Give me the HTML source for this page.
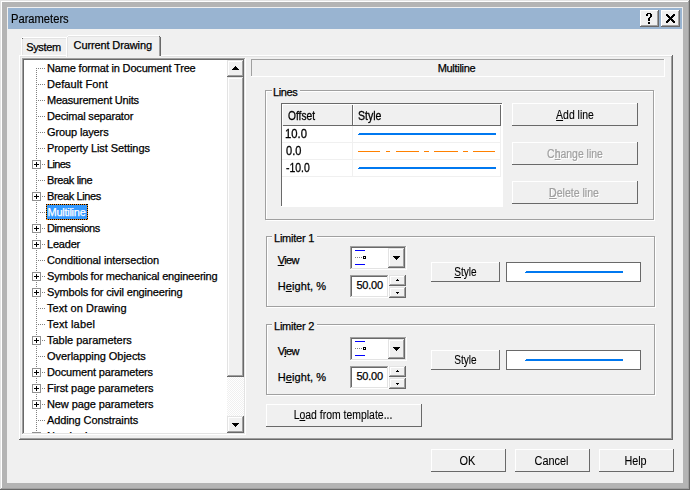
<!DOCTYPE html>
<html><head><meta charset="utf-8"><style>
html,body{margin:0;padding:0;width:690px;height:490px;overflow:hidden;background:#f0f0f0}
div{position:absolute}
.t{font-family:"Liberation Sans",sans-serif;font-size:11px;line-height:13px;white-space:pre;letter-spacing:-0.15px;-webkit-text-stroke:0.25px currentColor}
u{text-decoration:underline;text-underline-offset:1px}
</style></head><body>
<div style="left:0px;top:0px;width:690px;height:490px;background:#b4b4b4;"></div>
<div style="left:0px;top:0px;width:689px;height:1px;background:#e3e3e3;"></div>
<div style="left:0px;top:0px;width:1px;height:489px;background:#e3e3e3;"></div>
<div style="left:0px;top:489px;width:690px;height:1px;background:#696969;"></div>
<div style="left:689px;top:0px;width:1px;height:490px;background:#696969;"></div>
<div style="left:1px;top:1px;width:687px;height:1px;background:#fff;"></div>
<div style="left:1px;top:1px;width:1px;height:487px;background:#fff;"></div>
<div style="left:1px;top:488px;width:688px;height:1px;background:#a0a0a0;"></div>
<div style="left:688px;top:1px;width:1px;height:488px;background:#a0a0a0;"></div>
<div style="left:7px;top:7px;width:676px;height:476px;background:#f0f0f0;"></div>
<div style="left:8px;top:8px;width:674px;height:21px;background:#99b4d1;"></div>
<div class="t" style="left:10.6px;top:13px;color:#000;font-size:12px;letter-spacing:0;-webkit-text-stroke:0.15px currentColor;transform:scaleX(0.93);transform-origin:0 0">Parameters</div>
<div style="left:640px;top:10px;width:19px;height:17px;background:#f0f0f0;"></div>
<div style="left:640px;top:10px;width:18px;height:1px;background:#fff;"></div>
<div style="left:640px;top:10px;width:1px;height:16px;background:#fff;"></div>
<div style="left:640px;top:26px;width:19px;height:1px;background:#696969;"></div>
<div style="left:658px;top:10px;width:1px;height:17px;background:#696969;"></div>
<div style="left:641px;top:11px;width:16px;height:1px;background:#f0f0f0;"></div>
<div style="left:641px;top:11px;width:1px;height:14px;background:#f0f0f0;"></div>
<div style="left:641px;top:25px;width:17px;height:1px;background:#a0a0a0;"></div>
<div style="left:657px;top:11px;width:1px;height:15px;background:#a0a0a0;"></div>
<div style="left:661px;top:10px;width:19px;height:17px;background:#f0f0f0;"></div>
<div style="left:661px;top:10px;width:18px;height:1px;background:#fff;"></div>
<div style="left:661px;top:10px;width:1px;height:16px;background:#fff;"></div>
<div style="left:661px;top:26px;width:19px;height:1px;background:#696969;"></div>
<div style="left:679px;top:10px;width:1px;height:17px;background:#696969;"></div>
<div style="left:662px;top:11px;width:16px;height:1px;background:#f0f0f0;"></div>
<div style="left:662px;top:11px;width:1px;height:14px;background:#f0f0f0;"></div>
<div style="left:662px;top:25px;width:17px;height:1px;background:#a0a0a0;"></div>
<div style="left:678px;top:11px;width:1px;height:15px;background:#a0a0a0;"></div>
<div style="left:647px;top:13px;width:4px;height:1px;background:#000;"></div>
<div style="left:646px;top:14px;width:2px;height:1px;background:#000;"></div>
<div style="left:650px;top:14px;width:2px;height:1px;background:#000;"></div>
<div style="left:646px;top:15px;width:2px;height:1px;background:#000;"></div>
<div style="left:650px;top:15px;width:2px;height:1px;background:#000;"></div>
<div style="left:650px;top:16px;width:2px;height:1px;background:#000;"></div>
<div style="left:649px;top:17px;width:2px;height:1px;background:#000;"></div>
<div style="left:648px;top:18px;width:2px;height:1px;background:#000;"></div>
<div style="left:648px;top:19px;width:2px;height:1px;background:#000;"></div>
<div style="left:648px;top:20px;width:2px;height:1px;background:#000;"></div>
<div style="left:648px;top:22px;width:2px;height:1px;background:#000;"></div>
<div style="left:648px;top:23px;width:2px;height:1px;background:#000;"></div>
<div style="left:666px;top:14px;width:2px;height:1px;background:#000;"></div>
<div style="left:673px;top:14px;width:2px;height:1px;background:#000;"></div>
<div style="left:666px;top:15px;width:3px;height:1px;background:#000;"></div>
<div style="left:672px;top:15px;width:3px;height:1px;background:#000;"></div>
<div style="left:667px;top:16px;width:3px;height:1px;background:#000;"></div>
<div style="left:671px;top:16px;width:3px;height:1px;background:#000;"></div>
<div style="left:668px;top:17px;width:5px;height:1px;background:#000;"></div>
<div style="left:669px;top:18px;width:3px;height:1px;background:#000;"></div>
<div style="left:668px;top:19px;width:5px;height:1px;background:#000;"></div>
<div style="left:667px;top:20px;width:3px;height:1px;background:#000;"></div>
<div style="left:671px;top:20px;width:3px;height:1px;background:#000;"></div>
<div style="left:666px;top:21px;width:3px;height:1px;background:#000;"></div>
<div style="left:672px;top:21px;width:3px;height:1px;background:#000;"></div>
<div style="left:666px;top:22px;width:2px;height:1px;background:#000;"></div>
<div style="left:673px;top:22px;width:2px;height:1px;background:#000;"></div>
<div style="left:19px;top:55px;width:654px;height:385px;background:#f0f0f0;"></div>
<div style="left:19px;top:55px;width:653px;height:1px;background:#fff;"></div>
<div style="left:19px;top:55px;width:1px;height:384px;background:#fff;"></div>
<div style="left:19px;top:439px;width:654px;height:1px;background:#696969;"></div>
<div style="left:672px;top:55px;width:1px;height:385px;background:#696969;"></div>
<div style="left:20px;top:56px;width:651px;height:1px;background:#e3e3e3;"></div>
<div style="left:20px;top:56px;width:1px;height:382px;background:#e3e3e3;"></div>
<div style="left:20px;top:438px;width:652px;height:1px;background:#a0a0a0;"></div>
<div style="left:671px;top:56px;width:1px;height:383px;background:#a0a0a0;"></div>
<div style="left:22px;top:37px;width:45px;height:1px;background:#fff;"></div>
<div style="left:21px;top:38px;width:1px;height:17px;background:#fff;"></div>
<div style="left:23px;top:38px;width:44px;height:1px;background:#e3e3e3;"></div>
<div style="left:22px;top:39px;width:1px;height:16px;background:#e3e3e3;"></div>
<div style="left:22px;top:38px;width:1px;height:1px;background:#696969;"></div>
<div class="t" style="left:26.2px;top:41px;color:#000;letter-spacing:-0.35px">System</div>
<div style="left:66px;top:35px;width:95px;height:22px;background:#f0f0f0;"></div>
<div style="left:68px;top:35px;width:91px;height:1px;background:#fff;"></div>
<div style="left:67px;top:36px;width:1px;height:1px;background:#fff;"></div>
<div style="left:66px;top:37px;width:1px;height:20px;background:#fff;"></div>
<div style="left:68px;top:36px;width:91px;height:1px;background:#e3e3e3;"></div>
<div style="left:67px;top:37px;width:1px;height:20px;background:#e3e3e3;"></div>
<div style="left:159px;top:36px;width:1px;height:20px;background:#a0a0a0;"></div>
<div style="left:160px;top:37px;width:1px;height:19px;background:#696969;"></div>
<div style="left:159px;top:36px;width:1px;height:1px;background:#696969;"></div>
<div class="t" style="left:73.6px;top:39px;color:#000;letter-spacing:-0.12px">Current Drawing</div>
<div style="left:22px;top:58px;width:224px;height:377px;background:#fff;"></div>
<div style="left:22px;top:58px;width:223px;height:1px;background:#a0a0a0;"></div>
<div style="left:22px;top:58px;width:1px;height:376px;background:#a0a0a0;"></div>
<div style="left:22px;top:434px;width:224px;height:1px;background:#fff;"></div>
<div style="left:245px;top:58px;width:1px;height:377px;background:#fff;"></div>
<div style="left:23px;top:59px;width:221px;height:1px;background:#696969;"></div>
<div style="left:23px;top:59px;width:1px;height:374px;background:#696969;"></div>
<div style="left:23px;top:433px;width:222px;height:1px;background:#e3e3e3;"></div>
<div style="left:244px;top:59px;width:1px;height:375px;background:#e3e3e3;"></div>
<div style="left:24px;top:60px;width:203px;height:373px;overflow:hidden;background:#fff">
<svg style="position:absolute;left:0;top:0" width="203" height="373">
<rect x="12" y="8" width="1" height="1" fill="#808080"/>
<rect x="12" y="10" width="1" height="1" fill="#808080"/>
<rect x="12" y="12" width="1" height="1" fill="#808080"/>
<rect x="12" y="14" width="1" height="1" fill="#808080"/>
<rect x="12" y="16" width="1" height="1" fill="#808080"/>
<rect x="12" y="18" width="1" height="1" fill="#808080"/>
<rect x="12" y="20" width="1" height="1" fill="#808080"/>
<rect x="12" y="22" width="1" height="1" fill="#808080"/>
<rect x="12" y="24" width="1" height="1" fill="#808080"/>
<rect x="12" y="26" width="1" height="1" fill="#808080"/>
<rect x="12" y="28" width="1" height="1" fill="#808080"/>
<rect x="12" y="30" width="1" height="1" fill="#808080"/>
<rect x="12" y="32" width="1" height="1" fill="#808080"/>
<rect x="12" y="34" width="1" height="1" fill="#808080"/>
<rect x="12" y="36" width="1" height="1" fill="#808080"/>
<rect x="12" y="38" width="1" height="1" fill="#808080"/>
<rect x="12" y="40" width="1" height="1" fill="#808080"/>
<rect x="12" y="42" width="1" height="1" fill="#808080"/>
<rect x="12" y="44" width="1" height="1" fill="#808080"/>
<rect x="12" y="46" width="1" height="1" fill="#808080"/>
<rect x="12" y="48" width="1" height="1" fill="#808080"/>
<rect x="12" y="50" width="1" height="1" fill="#808080"/>
<rect x="12" y="52" width="1" height="1" fill="#808080"/>
<rect x="12" y="54" width="1" height="1" fill="#808080"/>
<rect x="12" y="56" width="1" height="1" fill="#808080"/>
<rect x="12" y="58" width="1" height="1" fill="#808080"/>
<rect x="12" y="60" width="1" height="1" fill="#808080"/>
<rect x="12" y="62" width="1" height="1" fill="#808080"/>
<rect x="12" y="64" width="1" height="1" fill="#808080"/>
<rect x="12" y="66" width="1" height="1" fill="#808080"/>
<rect x="12" y="68" width="1" height="1" fill="#808080"/>
<rect x="12" y="70" width="1" height="1" fill="#808080"/>
<rect x="12" y="72" width="1" height="1" fill="#808080"/>
<rect x="12" y="74" width="1" height="1" fill="#808080"/>
<rect x="12" y="76" width="1" height="1" fill="#808080"/>
<rect x="12" y="78" width="1" height="1" fill="#808080"/>
<rect x="12" y="80" width="1" height="1" fill="#808080"/>
<rect x="12" y="82" width="1" height="1" fill="#808080"/>
<rect x="12" y="84" width="1" height="1" fill="#808080"/>
<rect x="12" y="86" width="1" height="1" fill="#808080"/>
<rect x="12" y="88" width="1" height="1" fill="#808080"/>
<rect x="12" y="90" width="1" height="1" fill="#808080"/>
<rect x="12" y="92" width="1" height="1" fill="#808080"/>
<rect x="12" y="94" width="1" height="1" fill="#808080"/>
<rect x="12" y="96" width="1" height="1" fill="#808080"/>
<rect x="12" y="98" width="1" height="1" fill="#808080"/>
<rect x="12" y="100" width="1" height="1" fill="#808080"/>
<rect x="12" y="102" width="1" height="1" fill="#808080"/>
<rect x="12" y="104" width="1" height="1" fill="#808080"/>
<rect x="12" y="106" width="1" height="1" fill="#808080"/>
<rect x="12" y="108" width="1" height="1" fill="#808080"/>
<rect x="12" y="110" width="1" height="1" fill="#808080"/>
<rect x="12" y="112" width="1" height="1" fill="#808080"/>
<rect x="12" y="114" width="1" height="1" fill="#808080"/>
<rect x="12" y="116" width="1" height="1" fill="#808080"/>
<rect x="12" y="118" width="1" height="1" fill="#808080"/>
<rect x="12" y="120" width="1" height="1" fill="#808080"/>
<rect x="12" y="122" width="1" height="1" fill="#808080"/>
<rect x="12" y="124" width="1" height="1" fill="#808080"/>
<rect x="12" y="126" width="1" height="1" fill="#808080"/>
<rect x="12" y="128" width="1" height="1" fill="#808080"/>
<rect x="12" y="130" width="1" height="1" fill="#808080"/>
<rect x="12" y="132" width="1" height="1" fill="#808080"/>
<rect x="12" y="134" width="1" height="1" fill="#808080"/>
<rect x="12" y="136" width="1" height="1" fill="#808080"/>
<rect x="12" y="138" width="1" height="1" fill="#808080"/>
<rect x="12" y="140" width="1" height="1" fill="#808080"/>
<rect x="12" y="142" width="1" height="1" fill="#808080"/>
<rect x="12" y="144" width="1" height="1" fill="#808080"/>
<rect x="12" y="146" width="1" height="1" fill="#808080"/>
<rect x="12" y="148" width="1" height="1" fill="#808080"/>
<rect x="12" y="150" width="1" height="1" fill="#808080"/>
<rect x="12" y="152" width="1" height="1" fill="#808080"/>
<rect x="12" y="154" width="1" height="1" fill="#808080"/>
<rect x="12" y="156" width="1" height="1" fill="#808080"/>
<rect x="12" y="158" width="1" height="1" fill="#808080"/>
<rect x="12" y="160" width="1" height="1" fill="#808080"/>
<rect x="12" y="162" width="1" height="1" fill="#808080"/>
<rect x="12" y="164" width="1" height="1" fill="#808080"/>
<rect x="12" y="166" width="1" height="1" fill="#808080"/>
<rect x="12" y="168" width="1" height="1" fill="#808080"/>
<rect x="12" y="170" width="1" height="1" fill="#808080"/>
<rect x="12" y="172" width="1" height="1" fill="#808080"/>
<rect x="12" y="174" width="1" height="1" fill="#808080"/>
<rect x="12" y="176" width="1" height="1" fill="#808080"/>
<rect x="12" y="178" width="1" height="1" fill="#808080"/>
<rect x="12" y="180" width="1" height="1" fill="#808080"/>
<rect x="12" y="182" width="1" height="1" fill="#808080"/>
<rect x="12" y="184" width="1" height="1" fill="#808080"/>
<rect x="12" y="186" width="1" height="1" fill="#808080"/>
<rect x="12" y="188" width="1" height="1" fill="#808080"/>
<rect x="12" y="190" width="1" height="1" fill="#808080"/>
<rect x="12" y="192" width="1" height="1" fill="#808080"/>
<rect x="12" y="194" width="1" height="1" fill="#808080"/>
<rect x="12" y="196" width="1" height="1" fill="#808080"/>
<rect x="12" y="198" width="1" height="1" fill="#808080"/>
<rect x="12" y="200" width="1" height="1" fill="#808080"/>
<rect x="12" y="202" width="1" height="1" fill="#808080"/>
<rect x="12" y="204" width="1" height="1" fill="#808080"/>
<rect x="12" y="206" width="1" height="1" fill="#808080"/>
<rect x="12" y="208" width="1" height="1" fill="#808080"/>
<rect x="12" y="210" width="1" height="1" fill="#808080"/>
<rect x="12" y="212" width="1" height="1" fill="#808080"/>
<rect x="12" y="214" width="1" height="1" fill="#808080"/>
<rect x="12" y="216" width="1" height="1" fill="#808080"/>
<rect x="12" y="218" width="1" height="1" fill="#808080"/>
<rect x="12" y="220" width="1" height="1" fill="#808080"/>
<rect x="12" y="222" width="1" height="1" fill="#808080"/>
<rect x="12" y="224" width="1" height="1" fill="#808080"/>
<rect x="12" y="226" width="1" height="1" fill="#808080"/>
<rect x="12" y="228" width="1" height="1" fill="#808080"/>
<rect x="12" y="230" width="1" height="1" fill="#808080"/>
<rect x="12" y="232" width="1" height="1" fill="#808080"/>
<rect x="12" y="234" width="1" height="1" fill="#808080"/>
<rect x="12" y="236" width="1" height="1" fill="#808080"/>
<rect x="12" y="238" width="1" height="1" fill="#808080"/>
<rect x="12" y="240" width="1" height="1" fill="#808080"/>
<rect x="12" y="242" width="1" height="1" fill="#808080"/>
<rect x="12" y="244" width="1" height="1" fill="#808080"/>
<rect x="12" y="246" width="1" height="1" fill="#808080"/>
<rect x="12" y="248" width="1" height="1" fill="#808080"/>
<rect x="12" y="250" width="1" height="1" fill="#808080"/>
<rect x="12" y="252" width="1" height="1" fill="#808080"/>
<rect x="12" y="254" width="1" height="1" fill="#808080"/>
<rect x="12" y="256" width="1" height="1" fill="#808080"/>
<rect x="12" y="258" width="1" height="1" fill="#808080"/>
<rect x="12" y="260" width="1" height="1" fill="#808080"/>
<rect x="12" y="262" width="1" height="1" fill="#808080"/>
<rect x="12" y="264" width="1" height="1" fill="#808080"/>
<rect x="12" y="266" width="1" height="1" fill="#808080"/>
<rect x="12" y="268" width="1" height="1" fill="#808080"/>
<rect x="12" y="270" width="1" height="1" fill="#808080"/>
<rect x="12" y="272" width="1" height="1" fill="#808080"/>
<rect x="12" y="274" width="1" height="1" fill="#808080"/>
<rect x="12" y="276" width="1" height="1" fill="#808080"/>
<rect x="12" y="278" width="1" height="1" fill="#808080"/>
<rect x="12" y="280" width="1" height="1" fill="#808080"/>
<rect x="12" y="282" width="1" height="1" fill="#808080"/>
<rect x="12" y="284" width="1" height="1" fill="#808080"/>
<rect x="12" y="286" width="1" height="1" fill="#808080"/>
<rect x="12" y="288" width="1" height="1" fill="#808080"/>
<rect x="12" y="290" width="1" height="1" fill="#808080"/>
<rect x="12" y="292" width="1" height="1" fill="#808080"/>
<rect x="12" y="294" width="1" height="1" fill="#808080"/>
<rect x="12" y="296" width="1" height="1" fill="#808080"/>
<rect x="12" y="298" width="1" height="1" fill="#808080"/>
<rect x="12" y="300" width="1" height="1" fill="#808080"/>
<rect x="12" y="302" width="1" height="1" fill="#808080"/>
<rect x="12" y="304" width="1" height="1" fill="#808080"/>
<rect x="12" y="306" width="1" height="1" fill="#808080"/>
<rect x="12" y="308" width="1" height="1" fill="#808080"/>
<rect x="12" y="310" width="1" height="1" fill="#808080"/>
<rect x="12" y="312" width="1" height="1" fill="#808080"/>
<rect x="12" y="314" width="1" height="1" fill="#808080"/>
<rect x="12" y="316" width="1" height="1" fill="#808080"/>
<rect x="12" y="318" width="1" height="1" fill="#808080"/>
<rect x="12" y="320" width="1" height="1" fill="#808080"/>
<rect x="12" y="322" width="1" height="1" fill="#808080"/>
<rect x="12" y="324" width="1" height="1" fill="#808080"/>
<rect x="12" y="326" width="1" height="1" fill="#808080"/>
<rect x="12" y="328" width="1" height="1" fill="#808080"/>
<rect x="12" y="330" width="1" height="1" fill="#808080"/>
<rect x="12" y="332" width="1" height="1" fill="#808080"/>
<rect x="12" y="334" width="1" height="1" fill="#808080"/>
<rect x="12" y="336" width="1" height="1" fill="#808080"/>
<rect x="12" y="338" width="1" height="1" fill="#808080"/>
<rect x="12" y="340" width="1" height="1" fill="#808080"/>
<rect x="12" y="342" width="1" height="1" fill="#808080"/>
<rect x="12" y="344" width="1" height="1" fill="#808080"/>
<rect x="12" y="346" width="1" height="1" fill="#808080"/>
<rect x="12" y="348" width="1" height="1" fill="#808080"/>
<rect x="12" y="350" width="1" height="1" fill="#808080"/>
<rect x="12" y="352" width="1" height="1" fill="#808080"/>
<rect x="12" y="354" width="1" height="1" fill="#808080"/>
<rect x="12" y="356" width="1" height="1" fill="#808080"/>
<rect x="12" y="358" width="1" height="1" fill="#808080"/>
<rect x="12" y="360" width="1" height="1" fill="#808080"/>
<rect x="12" y="362" width="1" height="1" fill="#808080"/>
<rect x="12" y="364" width="1" height="1" fill="#808080"/>
<rect x="12" y="366" width="1" height="1" fill="#808080"/>
<rect x="12" y="368" width="1" height="1" fill="#808080"/>
<rect x="12" y="370" width="1" height="1" fill="#808080"/>
<rect x="12" y="372" width="1" height="1" fill="#808080"/>
<rect x="14" y="8" width="1" height="1" fill="#808080"/>
<rect x="16" y="8" width="1" height="1" fill="#808080"/>
<rect x="18" y="8" width="1" height="1" fill="#808080"/>
<rect x="20" y="8" width="1" height="1" fill="#808080"/>
<rect x="14" y="24" width="1" height="1" fill="#808080"/>
<rect x="16" y="24" width="1" height="1" fill="#808080"/>
<rect x="18" y="24" width="1" height="1" fill="#808080"/>
<rect x="20" y="24" width="1" height="1" fill="#808080"/>
<rect x="14" y="40" width="1" height="1" fill="#808080"/>
<rect x="16" y="40" width="1" height="1" fill="#808080"/>
<rect x="18" y="40" width="1" height="1" fill="#808080"/>
<rect x="20" y="40" width="1" height="1" fill="#808080"/>
<rect x="14" y="56" width="1" height="1" fill="#808080"/>
<rect x="16" y="56" width="1" height="1" fill="#808080"/>
<rect x="18" y="56" width="1" height="1" fill="#808080"/>
<rect x="20" y="56" width="1" height="1" fill="#808080"/>
<rect x="14" y="72" width="1" height="1" fill="#808080"/>
<rect x="16" y="72" width="1" height="1" fill="#808080"/>
<rect x="18" y="72" width="1" height="1" fill="#808080"/>
<rect x="20" y="72" width="1" height="1" fill="#808080"/>
<rect x="14" y="88" width="1" height="1" fill="#808080"/>
<rect x="16" y="88" width="1" height="1" fill="#808080"/>
<rect x="18" y="88" width="1" height="1" fill="#808080"/>
<rect x="20" y="88" width="1" height="1" fill="#808080"/>
<rect x="18" y="104" width="1" height="1" fill="#808080"/>
<rect x="20" y="104" width="1" height="1" fill="#808080"/>
<rect x="8" y="100" width="9" height="9" fill="#fff"/>
<rect x="8.5" y="100.5" width="8" height="8" fill="none" stroke="#919191" stroke-width="1"/>
<rect x="10" y="104" width="5" height="1" fill="#000"/>
<rect x="12" y="102" width="1" height="5" fill="#000"/>
<rect x="14" y="120" width="1" height="1" fill="#808080"/>
<rect x="16" y="120" width="1" height="1" fill="#808080"/>
<rect x="18" y="120" width="1" height="1" fill="#808080"/>
<rect x="20" y="120" width="1" height="1" fill="#808080"/>
<rect x="18" y="136" width="1" height="1" fill="#808080"/>
<rect x="20" y="136" width="1" height="1" fill="#808080"/>
<rect x="8" y="132" width="9" height="9" fill="#fff"/>
<rect x="8.5" y="132.5" width="8" height="8" fill="none" stroke="#919191" stroke-width="1"/>
<rect x="10" y="136" width="5" height="1" fill="#000"/>
<rect x="12" y="134" width="1" height="5" fill="#000"/>
<rect x="14" y="152" width="1" height="1" fill="#808080"/>
<rect x="16" y="152" width="1" height="1" fill="#808080"/>
<rect x="18" y="152" width="1" height="1" fill="#808080"/>
<rect x="20" y="152" width="1" height="1" fill="#808080"/>
<rect x="18" y="168" width="1" height="1" fill="#808080"/>
<rect x="20" y="168" width="1" height="1" fill="#808080"/>
<rect x="8" y="164" width="9" height="9" fill="#fff"/>
<rect x="8.5" y="164.5" width="8" height="8" fill="none" stroke="#919191" stroke-width="1"/>
<rect x="10" y="168" width="5" height="1" fill="#000"/>
<rect x="12" y="166" width="1" height="5" fill="#000"/>
<rect x="18" y="184" width="1" height="1" fill="#808080"/>
<rect x="20" y="184" width="1" height="1" fill="#808080"/>
<rect x="8" y="180" width="9" height="9" fill="#fff"/>
<rect x="8.5" y="180.5" width="8" height="8" fill="none" stroke="#919191" stroke-width="1"/>
<rect x="10" y="184" width="5" height="1" fill="#000"/>
<rect x="12" y="182" width="1" height="5" fill="#000"/>
<rect x="14" y="200" width="1" height="1" fill="#808080"/>
<rect x="16" y="200" width="1" height="1" fill="#808080"/>
<rect x="18" y="200" width="1" height="1" fill="#808080"/>
<rect x="20" y="200" width="1" height="1" fill="#808080"/>
<rect x="18" y="216" width="1" height="1" fill="#808080"/>
<rect x="20" y="216" width="1" height="1" fill="#808080"/>
<rect x="8" y="212" width="9" height="9" fill="#fff"/>
<rect x="8.5" y="212.5" width="8" height="8" fill="none" stroke="#919191" stroke-width="1"/>
<rect x="10" y="216" width="5" height="1" fill="#000"/>
<rect x="12" y="214" width="1" height="5" fill="#000"/>
<rect x="18" y="232" width="1" height="1" fill="#808080"/>
<rect x="20" y="232" width="1" height="1" fill="#808080"/>
<rect x="8" y="228" width="9" height="9" fill="#fff"/>
<rect x="8.5" y="228.5" width="8" height="8" fill="none" stroke="#919191" stroke-width="1"/>
<rect x="10" y="232" width="5" height="1" fill="#000"/>
<rect x="12" y="230" width="1" height="5" fill="#000"/>
<rect x="14" y="248" width="1" height="1" fill="#808080"/>
<rect x="16" y="248" width="1" height="1" fill="#808080"/>
<rect x="18" y="248" width="1" height="1" fill="#808080"/>
<rect x="20" y="248" width="1" height="1" fill="#808080"/>
<rect x="14" y="264" width="1" height="1" fill="#808080"/>
<rect x="16" y="264" width="1" height="1" fill="#808080"/>
<rect x="18" y="264" width="1" height="1" fill="#808080"/>
<rect x="20" y="264" width="1" height="1" fill="#808080"/>
<rect x="18" y="280" width="1" height="1" fill="#808080"/>
<rect x="20" y="280" width="1" height="1" fill="#808080"/>
<rect x="8" y="276" width="9" height="9" fill="#fff"/>
<rect x="8.5" y="276.5" width="8" height="8" fill="none" stroke="#919191" stroke-width="1"/>
<rect x="10" y="280" width="5" height="1" fill="#000"/>
<rect x="12" y="278" width="1" height="5" fill="#000"/>
<rect x="14" y="296" width="1" height="1" fill="#808080"/>
<rect x="16" y="296" width="1" height="1" fill="#808080"/>
<rect x="18" y="296" width="1" height="1" fill="#808080"/>
<rect x="20" y="296" width="1" height="1" fill="#808080"/>
<rect x="18" y="312" width="1" height="1" fill="#808080"/>
<rect x="20" y="312" width="1" height="1" fill="#808080"/>
<rect x="8" y="308" width="9" height="9" fill="#fff"/>
<rect x="8.5" y="308.5" width="8" height="8" fill="none" stroke="#919191" stroke-width="1"/>
<rect x="10" y="312" width="5" height="1" fill="#000"/>
<rect x="12" y="310" width="1" height="5" fill="#000"/>
<rect x="18" y="328" width="1" height="1" fill="#808080"/>
<rect x="20" y="328" width="1" height="1" fill="#808080"/>
<rect x="8" y="324" width="9" height="9" fill="#fff"/>
<rect x="8.5" y="324.5" width="8" height="8" fill="none" stroke="#919191" stroke-width="1"/>
<rect x="10" y="328" width="5" height="1" fill="#000"/>
<rect x="12" y="326" width="1" height="5" fill="#000"/>
<rect x="18" y="344" width="1" height="1" fill="#808080"/>
<rect x="20" y="344" width="1" height="1" fill="#808080"/>
<rect x="8" y="340" width="9" height="9" fill="#fff"/>
<rect x="8.5" y="340.5" width="8" height="8" fill="none" stroke="#919191" stroke-width="1"/>
<rect x="10" y="344" width="5" height="1" fill="#000"/>
<rect x="12" y="342" width="1" height="5" fill="#000"/>
<rect x="14" y="360" width="1" height="1" fill="#808080"/>
<rect x="16" y="360" width="1" height="1" fill="#808080"/>
<rect x="18" y="360" width="1" height="1" fill="#808080"/>
<rect x="20" y="360" width="1" height="1" fill="#808080"/>
<rect x="18" y="376" width="1" height="1" fill="#808080"/>
<rect x="20" y="376" width="1" height="1" fill="#808080"/>
<rect x="8" y="372" width="9" height="9" fill="#fff"/>
<rect x="8.5" y="372.5" width="8" height="8" fill="none" stroke="#919191" stroke-width="1"/>
<rect x="10" y="376" width="5" height="1" fill="#000"/>
<rect x="12" y="374" width="1" height="5" fill="#000"/>
</svg>
<div class="t" style="left:23px;top:2px;letter-spacing:-0.175px">Name format in Document Tree</div>
<div class="t" style="left:23px;top:18px;letter-spacing:0.073px">Default Font</div>
<div class="t" style="left:23px;top:34px;letter-spacing:-0.206px">Measurement Units</div>
<div class="t" style="left:23px;top:50px;letter-spacing:-0.182px">Decimal separator</div>
<div class="t" style="left:23px;top:66px;letter-spacing:-0.119px">Group layers</div>
<div class="t" style="left:23px;top:82px;letter-spacing:-0.076px">Property List Settings</div>
<div class="t" style="left:23px;top:98px;letter-spacing:-0.625px">Lines</div>
<div class="t" style="left:23px;top:114px;letter-spacing:-0.356px">Break line</div>
<div class="t" style="left:23px;top:130px;letter-spacing:-0.38px">Break Lines</div>
<div style="left:22px;top:144px;width:42px;height:16px;background:#3399ff"></div>
<div style="left:22px;top:144px;width:42px;height:1px;background:repeating-linear-gradient(90deg,#000 0 1px,#f08c1e 1px 2px)"></div>
<div style="left:22px;top:159px;width:42px;height:1px;background:repeating-linear-gradient(90deg,#000 0 1px,#f08c1e 1px 2px)"></div>
<div style="left:22px;top:144px;width:1px;height:16px;background:repeating-linear-gradient(180deg,#000 0 1px,#f08c1e 1px 2px)"></div>
<div style="left:63px;top:144px;width:1px;height:16px;background:repeating-linear-gradient(180deg,#000 0 1px,#f08c1e 1px 2px)"></div>
<div class="t" style="left:23.5px;top:146px;color:#fff;letter-spacing:-0.262px">Multiline</div>
<div class="t" style="left:23px;top:162px;letter-spacing:-0.467px">Dimensions</div>
<div class="t" style="left:23px;top:178px;letter-spacing:-0.2px">Leader</div>
<div class="t" style="left:23px;top:194px;letter-spacing:-0.101px">Conditional intersection</div>
<div class="t" style="left:23px;top:210px;letter-spacing:-0.203px">Symbols for mechanical engineering</div>
<div class="t" style="left:23px;top:226px;letter-spacing:-0.157px">Symbols for civil engineering</div>
<div class="t" style="left:23px;top:242px;letter-spacing:0.057px">Text on Drawing</div>
<div class="t" style="left:23px;top:258px;letter-spacing:0.155px">Text label</div>
<div class="t" style="left:23px;top:274px;letter-spacing:-0.014px">Table parameters</div>
<div class="t" style="left:23px;top:290px;letter-spacing:-0.045px">Overlapping Objects</div>
<div class="t" style="left:23px;top:306px;letter-spacing:-0.15px">Document parameters</div>
<div class="t" style="left:23px;top:322px;letter-spacing:-0.055px">First page parameters</div>
<div class="t" style="left:23px;top:338px;letter-spacing:-0.094px">New page parameters</div>
<div class="t" style="left:23px;top:354px;letter-spacing:-0.105px">Adding Constraints</div>
<div class="t" style="left:23px;top:370px;letter-spacing:-0.2px">Numbering</div>
</div>
<div style="left:227px;top:60px;width:17px;height:17px;background:#f0f0f0;"></div>
<div style="left:227px;top:60px;width:16px;height:1px;background:#e3e3e3;"></div>
<div style="left:227px;top:60px;width:1px;height:16px;background:#e3e3e3;"></div>
<div style="left:227px;top:76px;width:17px;height:1px;background:#696969;"></div>
<div style="left:243px;top:60px;width:1px;height:17px;background:#696969;"></div>
<div style="left:228px;top:61px;width:14px;height:1px;background:#fff;"></div>
<div style="left:228px;top:61px;width:1px;height:14px;background:#fff;"></div>
<div style="left:228px;top:75px;width:15px;height:1px;background:#a0a0a0;"></div>
<div style="left:242px;top:61px;width:1px;height:15px;background:#a0a0a0;"></div>
<div style="left:232px;top:69px;width:7px;height:1px;background:#000;"></div>
<div style="left:233px;top:68px;width:5px;height:1px;background:#000;"></div>
<div style="left:234px;top:67px;width:3px;height:1px;background:#000;"></div>
<div style="left:235px;top:66px;width:1px;height:1px;background:#000;"></div>
<div style="left:227px;top:77px;width:17px;height:300px;background:#f0f0f0;"></div>
<div style="left:227px;top:77px;width:16px;height:1px;background:#e3e3e3;"></div>
<div style="left:227px;top:77px;width:1px;height:299px;background:#e3e3e3;"></div>
<div style="left:227px;top:376px;width:17px;height:1px;background:#696969;"></div>
<div style="left:243px;top:77px;width:1px;height:300px;background:#696969;"></div>
<div style="left:228px;top:78px;width:14px;height:1px;background:#fff;"></div>
<div style="left:228px;top:78px;width:1px;height:297px;background:#fff;"></div>
<div style="left:228px;top:375px;width:15px;height:1px;background:#a0a0a0;"></div>
<div style="left:242px;top:78px;width:1px;height:298px;background:#a0a0a0;"></div>
<div style="left:227px;top:377px;width:17px;height:39px;background-image:repeating-conic-gradient(#fff 0 25%, #f0f0f0 0 50%);background-size:2px 2px"></div>
<div style="left:227px;top:416px;width:17px;height:17px;background:#f0f0f0;"></div>
<div style="left:227px;top:416px;width:16px;height:1px;background:#e3e3e3;"></div>
<div style="left:227px;top:416px;width:1px;height:16px;background:#e3e3e3;"></div>
<div style="left:227px;top:432px;width:17px;height:1px;background:#696969;"></div>
<div style="left:243px;top:416px;width:1px;height:17px;background:#696969;"></div>
<div style="left:228px;top:417px;width:14px;height:1px;background:#fff;"></div>
<div style="left:228px;top:417px;width:1px;height:14px;background:#fff;"></div>
<div style="left:228px;top:431px;width:15px;height:1px;background:#a0a0a0;"></div>
<div style="left:242px;top:417px;width:1px;height:15px;background:#a0a0a0;"></div>
<div style="left:232px;top:423px;width:7px;height:1px;background:#000;"></div>
<div style="left:233px;top:424px;width:5px;height:1px;background:#000;"></div>
<div style="left:234px;top:425px;width:3px;height:1px;background:#000;"></div>
<div style="left:235px;top:426px;width:1px;height:1px;background:#000;"></div>
<div style="left:251px;top:59px;width:413px;height:1px;background:#a0a0a0;"></div>
<div style="left:251px;top:59px;width:1px;height:17px;background:#a0a0a0;"></div>
<div style="left:251px;top:76px;width:414px;height:1px;background:#fff;"></div>
<div style="left:664px;top:59px;width:1px;height:18px;background:#fff;"></div>
<div class="t" style="left:249.5px;top:62px;width:414px;text-align:center;color:#000;letter-spacing:-0.3px">Multiline</div>
<div style="left:266px;top:91px;width:389px;height:1px;background:#fff;"></div>
<div style="left:266px;top:91px;width:1px;height:130px;background:#fff;"></div>
<div style="left:266px;top:220px;width:389px;height:1px;background:#fff;"></div>
<div style="left:654px;top:91px;width:1px;height:130px;background:#fff;"></div>
<div style="left:265px;top:90px;width:389px;height:1px;background:#a0a0a0;"></div>
<div style="left:265px;top:90px;width:1px;height:130px;background:#a0a0a0;"></div>
<div style="left:265px;top:219px;width:389px;height:1px;background:#a0a0a0;"></div>
<div style="left:653px;top:90px;width:1px;height:130px;background:#a0a0a0;"></div>
<div style="left:272px;top:84px;width:28px;height:12px;background:#f0f0f0;"></div>
<div class="t" style="left:273px;top:86px;color:#000;letter-spacing:-0.4px">Lines</div>
<div style="left:281px;top:103px;width:222px;height:104px;background:#fff;"></div>
<div style="left:281px;top:103px;width:221px;height:1px;background:#696969;"></div>
<div style="left:281px;top:103px;width:1px;height:103px;background:#696969;"></div>
<div style="left:502px;top:104px;width:1px;height:103px;background:#fff;"></div>
<div style="left:282px;top:206px;width:221px;height:1px;background:#fff;"></div>
<div style="left:282px;top:104px;width:219px;height:22px;background:#f0f0f0;"></div>
<div style="left:282px;top:104px;width:219px;height:1px;background:#fff;"></div>
<div style="left:282px;top:104px;width:1px;height:21px;background:#fff;"></div>
<div style="left:283px;top:125px;width:218px;height:1px;background:#696969;"></div>
<div style="left:352px;top:105px;width:1px;height:20px;background:#696969;"></div>
<div style="left:353px;top:105px;width:1px;height:20px;background:#fff;"></div>
<div style="left:500px;top:105px;width:1px;height:21px;background:#696969;"></div>
<div class="t" style="left:287.5px;top:110px;color:#000;font-size:12px;letter-spacing:0;-webkit-text-stroke:0.3px currentColor;transform-origin:0 0;transform:scaleX(0.85)">Offset</div>
<div class="t" style="left:357.5px;top:110px;color:#000;font-size:12px;letter-spacing:0;-webkit-text-stroke:0.3px currentColor;transform-origin:0 0;transform:scaleX(0.88)">Style</div>
<div style="left:282px;top:142px;width:219px;height:1px;background:#f0f0f0;"></div>
<div style="left:282px;top:159px;width:219px;height:1px;background:#f0f0f0;"></div>
<div style="left:282px;top:176px;width:219px;height:1px;background:#f0f0f0;"></div>
<div style="left:352px;top:126px;width:1px;height:51px;background:#f0f0f0;"></div>
<div style="left:500px;top:126px;width:1px;height:51px;background:#f0f0f0;"></div>
<div class="t" style="left:285.4px;top:128px;color:#000;font-size:12px;letter-spacing:0;-webkit-text-stroke:0.3px currentColor;transform-origin:0 0;transform:scaleX(0.94)">10.0</div>
<div class="t" style="left:286.3px;top:145px;color:#000;font-size:12px;letter-spacing:0;-webkit-text-stroke:0.3px currentColor;transform-origin:0 0;transform:scaleX(0.92)">0.0</div>
<div class="t" style="left:286.3px;top:162px;color:#000;font-size:12px;letter-spacing:0;-webkit-text-stroke:0.3px currentColor;transform-origin:0 0;transform:scaleX(0.87)">-10.0</div>
<svg style="position:absolute;left:0;top:0" width="690" height="490"><rect x="359" y="133" width="137" height="2" fill="#0078f0"/><rect x="358" y="134" width="1" height="1" fill="#0078f0"/><rect x="359" y="167" width="137" height="2" fill="#0078f0"/><rect x="358" y="168" width="1" height="1" fill="#0078f0"/></svg>
<div style="left:358px;top:151px;width:22px;height:1px;background:#ff8000;"></div>
<div style="left:386px;top:151px;width:4px;height:1px;background:#ff8000;"></div>
<div style="left:396px;top:151px;width:23px;height:1px;background:#ff8000;"></div>
<div style="left:424px;top:151px;width:5px;height:1px;background:#ff8000;"></div>
<div style="left:434px;top:151px;width:24px;height:1px;background:#ff8000;"></div>
<div style="left:463px;top:151px;width:5px;height:1px;background:#ff8000;"></div>
<div style="left:473px;top:151px;width:22px;height:1px;background:#ff8000;"></div>
<div style="left:512px;top:103px;width:126px;height:23px;background:#f0f0f0;"></div>
<div style="left:512px;top:103px;width:125px;height:1px;background:#fff;"></div>
<div style="left:512px;top:103px;width:1px;height:22px;background:#fff;"></div>
<div style="left:512px;top:125px;width:126px;height:1px;background:#696969;"></div>
<div style="left:637px;top:103px;width:1px;height:23px;background:#696969;"></div>
<div class="t" style="left:511.9px;top:109px;width:126px;text-align:center;color:#000;font-size:12px;-webkit-text-stroke:0.1px currentColor;letter-spacing:0;transform:scaleX(0.87)"><u>A</u>dd line</div>
<div style="left:512px;top:142px;width:126px;height:23px;background:#f0f0f0;"></div>
<div style="left:512px;top:142px;width:125px;height:1px;background:#fff;"></div>
<div style="left:512px;top:142px;width:1px;height:22px;background:#fff;"></div>
<div style="left:512px;top:164px;width:126px;height:1px;background:#696969;"></div>
<div style="left:637px;top:142px;width:1px;height:23px;background:#696969;"></div>
<div class="t" style="left:511.7px;top:148px;width:126px;text-align:center;color:#a0a0a0;font-size:12px;-webkit-text-stroke:0.1px currentColor;letter-spacing:0;transform:scaleX(0.87);-webkit-text-stroke:0.2px currentColor;text-shadow:1px 1px #fff">C<u>h</u>ange line</div>
<div style="left:512px;top:181px;width:126px;height:23px;background:#f0f0f0;"></div>
<div style="left:512px;top:181px;width:125px;height:1px;background:#fff;"></div>
<div style="left:512px;top:181px;width:1px;height:22px;background:#fff;"></div>
<div style="left:512px;top:203px;width:126px;height:1px;background:#696969;"></div>
<div style="left:637px;top:181px;width:1px;height:23px;background:#696969;"></div>
<div class="t" style="left:511px;top:187px;width:126px;text-align:center;color:#a0a0a0;font-size:12px;-webkit-text-stroke:0.1px currentColor;letter-spacing:0;transform:scaleX(0.88);-webkit-text-stroke:0.2px currentColor;text-shadow:1px 1px #fff"><u>D</u>elete line</div>
<div style="left:267px;top:237px;width:389px;height:1px;background:#fff;"></div>
<div style="left:267px;top:237px;width:1px;height:71px;background:#fff;"></div>
<div style="left:267px;top:307px;width:389px;height:1px;background:#fff;"></div>
<div style="left:655px;top:237px;width:1px;height:71px;background:#fff;"></div>
<div style="left:266px;top:236px;width:389px;height:1px;background:#a0a0a0;"></div>
<div style="left:266px;top:236px;width:1px;height:71px;background:#a0a0a0;"></div>
<div style="left:266px;top:306px;width:389px;height:1px;background:#a0a0a0;"></div>
<div style="left:654px;top:236px;width:1px;height:71px;background:#a0a0a0;"></div>
<div style="left:272px;top:230px;width:45px;height:12px;background:#f0f0f0;"></div>
<div class="t" style="left:274px;top:232px;color:#000;letter-spacing:-0.22px">Limiter 1</div>
<div class="t" style="left:277.7px;top:254px;color:#000;letter-spacing:-0.6px"><u>V</u>iew</div>
<div class="t" style="left:277.7px;top:280px;color:#000;letter-spacing:0.09px">H<u>e</u>ight, %</div>
<div style="left:350px;top:246px;width:57px;height:24px;background:#fff;"></div>
<div style="left:350px;top:246px;width:56px;height:1px;background:#a0a0a0;"></div>
<div style="left:350px;top:246px;width:1px;height:23px;background:#a0a0a0;"></div>
<div style="left:350px;top:269px;width:57px;height:1px;background:#fff;"></div>
<div style="left:406px;top:246px;width:1px;height:24px;background:#fff;"></div>
<div style="left:351px;top:247px;width:54px;height:1px;background:#696969;"></div>
<div style="left:351px;top:247px;width:1px;height:21px;background:#696969;"></div>
<div style="left:351px;top:268px;width:55px;height:1px;background:#e3e3e3;"></div>
<div style="left:405px;top:247px;width:1px;height:22px;background:#e3e3e3;"></div>
<div style="left:388px;top:248px;width:17px;height:20px;background:#f0f0f0;"></div>
<div style="left:388px;top:248px;width:16px;height:1px;background:#e3e3e3;"></div>
<div style="left:388px;top:248px;width:1px;height:19px;background:#e3e3e3;"></div>
<div style="left:388px;top:267px;width:17px;height:1px;background:#696969;"></div>
<div style="left:404px;top:248px;width:1px;height:20px;background:#696969;"></div>
<div style="left:389px;top:249px;width:14px;height:1px;background:#fff;"></div>
<div style="left:389px;top:249px;width:1px;height:17px;background:#fff;"></div>
<div style="left:389px;top:266px;width:15px;height:1px;background:#a0a0a0;"></div>
<div style="left:403px;top:249px;width:1px;height:18px;background:#a0a0a0;"></div>
<div style="left:393px;top:256px;width:7px;height:1px;background:#000;"></div>
<div style="left:394px;top:257px;width:5px;height:1px;background:#000;"></div>
<div style="left:395px;top:258px;width:3px;height:1px;background:#000;"></div>
<div style="left:396px;top:259px;width:1px;height:1px;background:#000;"></div>
<div style="left:355px;top:250px;width:10px;height:1px;background:#0000ff;"></div>
<div style="left:355px;top:264px;width:10px;height:1px;background:#0000ff;"></div>
<div style="left:355px;top:257px;width:1px;height:1px;background:#808080;"></div>
<div style="left:357px;top:257px;width:1px;height:1px;background:#808080;"></div>
<div style="left:359px;top:257px;width:1px;height:1px;background:#808080;"></div>
<div style="left:361px;top:257px;width:1px;height:1px;background:#808080;"></div>
<div style="left:363px;top:256px;width:3px;height:3px;background:#000;"></div>
<div style="left:364px;top:257px;width:1px;height:1px;background:#fff;"></div>
<div style="left:350px;top:275px;width:39px;height:23px;background:#fff;"></div>
<div style="left:350px;top:275px;width:38px;height:1px;background:#a0a0a0;"></div>
<div style="left:350px;top:275px;width:1px;height:22px;background:#a0a0a0;"></div>
<div style="left:350px;top:297px;width:39px;height:1px;background:#fff;"></div>
<div style="left:388px;top:275px;width:1px;height:23px;background:#fff;"></div>
<div style="left:351px;top:276px;width:36px;height:1px;background:#696969;"></div>
<div style="left:351px;top:276px;width:1px;height:20px;background:#696969;"></div>
<div style="left:351px;top:296px;width:37px;height:1px;background:#e3e3e3;"></div>
<div style="left:387px;top:276px;width:1px;height:21px;background:#e3e3e3;"></div>
<div class="t" style="left:356.4px;top:279px;color:#000;letter-spacing:-0.22px">50.00</div>
<div style="left:389px;top:275px;width:17px;height:11px;background:#f0f0f0;"></div>
<div style="left:389px;top:275px;width:16px;height:1px;background:#e3e3e3;"></div>
<div style="left:389px;top:275px;width:1px;height:10px;background:#e3e3e3;"></div>
<div style="left:389px;top:285px;width:17px;height:1px;background:#696969;"></div>
<div style="left:405px;top:275px;width:1px;height:11px;background:#696969;"></div>
<div style="left:390px;top:276px;width:14px;height:1px;background:#fff;"></div>
<div style="left:390px;top:276px;width:1px;height:8px;background:#fff;"></div>
<div style="left:390px;top:284px;width:15px;height:1px;background:#a0a0a0;"></div>
<div style="left:404px;top:276px;width:1px;height:9px;background:#a0a0a0;"></div>
<div style="left:389px;top:287px;width:17px;height:11px;background:#f0f0f0;"></div>
<div style="left:389px;top:287px;width:16px;height:1px;background:#e3e3e3;"></div>
<div style="left:389px;top:287px;width:1px;height:10px;background:#e3e3e3;"></div>
<div style="left:389px;top:297px;width:17px;height:1px;background:#696969;"></div>
<div style="left:405px;top:287px;width:1px;height:11px;background:#696969;"></div>
<div style="left:390px;top:288px;width:14px;height:1px;background:#fff;"></div>
<div style="left:390px;top:288px;width:1px;height:8px;background:#fff;"></div>
<div style="left:390px;top:296px;width:15px;height:1px;background:#a0a0a0;"></div>
<div style="left:404px;top:288px;width:1px;height:9px;background:#a0a0a0;"></div>
<div style="left:396px;top:280px;width:3px;height:1px;background:#000;"></div>
<div style="left:397px;top:279px;width:1px;height:1px;background:#000;"></div>
<div style="left:396px;top:292px;width:3px;height:1px;background:#000;"></div>
<div style="left:397px;top:293px;width:1px;height:1px;background:#000;"></div>
<div style="left:431px;top:262px;width:69px;height:20px;background:#f0f0f0;"></div>
<div style="left:431px;top:262px;width:68px;height:1px;background:#fff;"></div>
<div style="left:431px;top:262px;width:1px;height:19px;background:#fff;"></div>
<div style="left:431px;top:281px;width:69px;height:1px;background:#696969;"></div>
<div style="left:499px;top:262px;width:1px;height:20px;background:#696969;"></div>
<div class="t" style="left:430.5px;top:265.5px;width:69px;text-align:center;color:#000;font-size:12px;-webkit-text-stroke:0.1px currentColor;letter-spacing:0;transform:scaleX(0.84)"><u>S</u>tyle</div>
<div style="left:506px;top:262px;width:135px;height:20px;background:#696969;"></div>
<div style="left:507px;top:263px;width:133px;height:18px;background:#fff;"></div>
<div style="left:526px;top:271px;width:97px;height:1px;background:#0078f0;"></div>
<div style="left:525px;top:272px;width:98px;height:1px;background:#0078f0;"></div>
<div style="left:267px;top:325px;width:389px;height:1px;background:#fff;"></div>
<div style="left:267px;top:325px;width:1px;height:71px;background:#fff;"></div>
<div style="left:267px;top:395px;width:389px;height:1px;background:#fff;"></div>
<div style="left:655px;top:325px;width:1px;height:71px;background:#fff;"></div>
<div style="left:266px;top:324px;width:389px;height:1px;background:#a0a0a0;"></div>
<div style="left:266px;top:324px;width:1px;height:71px;background:#a0a0a0;"></div>
<div style="left:266px;top:394px;width:389px;height:1px;background:#a0a0a0;"></div>
<div style="left:654px;top:324px;width:1px;height:71px;background:#a0a0a0;"></div>
<div style="left:272px;top:318px;width:45px;height:12px;background:#f0f0f0;"></div>
<div class="t" style="left:274px;top:320px;color:#000;letter-spacing:-0.22px">Limiter 2</div>
<div class="t" style="left:277.7px;top:345px;color:#000;letter-spacing:-0.6px">V<u>i</u>ew</div>
<div class="t" style="left:277.7px;top:371px;color:#000;letter-spacing:0.09px">H<u>e</u>ight, %</div>
<div style="left:350px;top:337px;width:57px;height:24px;background:#fff;"></div>
<div style="left:350px;top:337px;width:56px;height:1px;background:#a0a0a0;"></div>
<div style="left:350px;top:337px;width:1px;height:23px;background:#a0a0a0;"></div>
<div style="left:350px;top:360px;width:57px;height:1px;background:#fff;"></div>
<div style="left:406px;top:337px;width:1px;height:24px;background:#fff;"></div>
<div style="left:351px;top:338px;width:54px;height:1px;background:#696969;"></div>
<div style="left:351px;top:338px;width:1px;height:21px;background:#696969;"></div>
<div style="left:351px;top:359px;width:55px;height:1px;background:#e3e3e3;"></div>
<div style="left:405px;top:338px;width:1px;height:22px;background:#e3e3e3;"></div>
<div style="left:388px;top:339px;width:17px;height:20px;background:#f0f0f0;"></div>
<div style="left:388px;top:339px;width:16px;height:1px;background:#e3e3e3;"></div>
<div style="left:388px;top:339px;width:1px;height:19px;background:#e3e3e3;"></div>
<div style="left:388px;top:358px;width:17px;height:1px;background:#696969;"></div>
<div style="left:404px;top:339px;width:1px;height:20px;background:#696969;"></div>
<div style="left:389px;top:340px;width:14px;height:1px;background:#fff;"></div>
<div style="left:389px;top:340px;width:1px;height:17px;background:#fff;"></div>
<div style="left:389px;top:357px;width:15px;height:1px;background:#a0a0a0;"></div>
<div style="left:403px;top:340px;width:1px;height:18px;background:#a0a0a0;"></div>
<div style="left:393px;top:347px;width:7px;height:1px;background:#000;"></div>
<div style="left:394px;top:348px;width:5px;height:1px;background:#000;"></div>
<div style="left:395px;top:349px;width:3px;height:1px;background:#000;"></div>
<div style="left:396px;top:350px;width:1px;height:1px;background:#000;"></div>
<div style="left:355px;top:341px;width:10px;height:1px;background:#0000ff;"></div>
<div style="left:355px;top:355px;width:10px;height:1px;background:#0000ff;"></div>
<div style="left:355px;top:348px;width:1px;height:1px;background:#808080;"></div>
<div style="left:357px;top:348px;width:1px;height:1px;background:#808080;"></div>
<div style="left:359px;top:348px;width:1px;height:1px;background:#808080;"></div>
<div style="left:361px;top:348px;width:1px;height:1px;background:#808080;"></div>
<div style="left:363px;top:347px;width:3px;height:3px;background:#000;"></div>
<div style="left:364px;top:348px;width:1px;height:1px;background:#fff;"></div>
<div style="left:350px;top:366px;width:39px;height:23px;background:#fff;"></div>
<div style="left:350px;top:366px;width:38px;height:1px;background:#a0a0a0;"></div>
<div style="left:350px;top:366px;width:1px;height:22px;background:#a0a0a0;"></div>
<div style="left:350px;top:388px;width:39px;height:1px;background:#fff;"></div>
<div style="left:388px;top:366px;width:1px;height:23px;background:#fff;"></div>
<div style="left:351px;top:367px;width:36px;height:1px;background:#696969;"></div>
<div style="left:351px;top:367px;width:1px;height:20px;background:#696969;"></div>
<div style="left:351px;top:387px;width:37px;height:1px;background:#e3e3e3;"></div>
<div style="left:387px;top:367px;width:1px;height:21px;background:#e3e3e3;"></div>
<div class="t" style="left:356.4px;top:370px;color:#000;letter-spacing:-0.22px">50.00</div>
<div style="left:389px;top:366px;width:17px;height:11px;background:#f0f0f0;"></div>
<div style="left:389px;top:366px;width:16px;height:1px;background:#e3e3e3;"></div>
<div style="left:389px;top:366px;width:1px;height:10px;background:#e3e3e3;"></div>
<div style="left:389px;top:376px;width:17px;height:1px;background:#696969;"></div>
<div style="left:405px;top:366px;width:1px;height:11px;background:#696969;"></div>
<div style="left:390px;top:367px;width:14px;height:1px;background:#fff;"></div>
<div style="left:390px;top:367px;width:1px;height:8px;background:#fff;"></div>
<div style="left:390px;top:375px;width:15px;height:1px;background:#a0a0a0;"></div>
<div style="left:404px;top:367px;width:1px;height:9px;background:#a0a0a0;"></div>
<div style="left:389px;top:378px;width:17px;height:11px;background:#f0f0f0;"></div>
<div style="left:389px;top:378px;width:16px;height:1px;background:#e3e3e3;"></div>
<div style="left:389px;top:378px;width:1px;height:10px;background:#e3e3e3;"></div>
<div style="left:389px;top:388px;width:17px;height:1px;background:#696969;"></div>
<div style="left:405px;top:378px;width:1px;height:11px;background:#696969;"></div>
<div style="left:390px;top:379px;width:14px;height:1px;background:#fff;"></div>
<div style="left:390px;top:379px;width:1px;height:8px;background:#fff;"></div>
<div style="left:390px;top:387px;width:15px;height:1px;background:#a0a0a0;"></div>
<div style="left:404px;top:379px;width:1px;height:9px;background:#a0a0a0;"></div>
<div style="left:396px;top:371px;width:3px;height:1px;background:#000;"></div>
<div style="left:397px;top:370px;width:1px;height:1px;background:#000;"></div>
<div style="left:396px;top:383px;width:3px;height:1px;background:#000;"></div>
<div style="left:397px;top:384px;width:1px;height:1px;background:#000;"></div>
<div style="left:431px;top:350px;width:69px;height:20px;background:#f0f0f0;"></div>
<div style="left:431px;top:350px;width:68px;height:1px;background:#fff;"></div>
<div style="left:431px;top:350px;width:1px;height:19px;background:#fff;"></div>
<div style="left:431px;top:369px;width:69px;height:1px;background:#696969;"></div>
<div style="left:499px;top:350px;width:1px;height:20px;background:#696969;"></div>
<div class="t" style="left:430.5px;top:353.5px;width:69px;text-align:center;color:#000;font-size:12px;-webkit-text-stroke:0.1px currentColor;letter-spacing:0;transform:scaleX(0.84)">Style</div>
<div style="left:506px;top:350px;width:135px;height:20px;background:#696969;"></div>
<div style="left:507px;top:351px;width:133px;height:18px;background:#fff;"></div>
<div style="left:526px;top:359px;width:97px;height:1px;background:#0078f0;"></div>
<div style="left:525px;top:360px;width:98px;height:1px;background:#0078f0;"></div>
<div style="left:266px;top:404px;width:156px;height:23px;background:#f0f0f0;"></div>
<div style="left:266px;top:404px;width:155px;height:1px;background:#fff;"></div>
<div style="left:266px;top:404px;width:1px;height:22px;background:#fff;"></div>
<div style="left:266px;top:426px;width:156px;height:1px;background:#696969;"></div>
<div style="left:421px;top:404px;width:1px;height:23px;background:#696969;"></div>
<div class="t" style="left:265px;top:409px;width:156px;text-align:center;color:#000;font-size:12px;-webkit-text-stroke:0.1px currentColor;letter-spacing:0;transform:scaleX(0.87)">L<u>o</u>ad from template...</div>
<div style="left:431px;top:449px;width:75px;height:23px;background:#f0f0f0;"></div>
<div style="left:431px;top:449px;width:74px;height:1px;background:#fff;"></div>
<div style="left:431px;top:449px;width:1px;height:22px;background:#fff;"></div>
<div style="left:431px;top:471px;width:75px;height:1px;background:#696969;"></div>
<div style="left:505px;top:449px;width:1px;height:23px;background:#696969;"></div>
<div class="t" style="left:430px;top:455px;width:75px;text-align:center;color:#000;font-size:12px;-webkit-text-stroke:0.1px currentColor;letter-spacing:0;transform:scaleX(0.91)">OK</div>
<div style="left:515px;top:449px;width:75px;height:23px;background:#f0f0f0;"></div>
<div style="left:515px;top:449px;width:74px;height:1px;background:#fff;"></div>
<div style="left:515px;top:449px;width:1px;height:22px;background:#fff;"></div>
<div style="left:515px;top:471px;width:75px;height:1px;background:#696969;"></div>
<div style="left:589px;top:449px;width:1px;height:23px;background:#696969;"></div>
<div class="t" style="left:514px;top:455px;width:75px;text-align:center;color:#000;font-size:12px;-webkit-text-stroke:0.1px currentColor;letter-spacing:0;transform:scaleX(0.91)">Cancel</div>
<div style="left:599px;top:449px;width:75px;height:23px;background:#f0f0f0;"></div>
<div style="left:599px;top:449px;width:74px;height:1px;background:#fff;"></div>
<div style="left:599px;top:449px;width:1px;height:22px;background:#fff;"></div>
<div style="left:599px;top:471px;width:75px;height:1px;background:#696969;"></div>
<div style="left:673px;top:449px;width:1px;height:23px;background:#696969;"></div>
<div class="t" style="left:598px;top:455px;width:75px;text-align:center;color:#000;font-size:12px;-webkit-text-stroke:0.1px currentColor;letter-spacing:0;transform:scaleX(0.9)">Help</div>
</body></html>
